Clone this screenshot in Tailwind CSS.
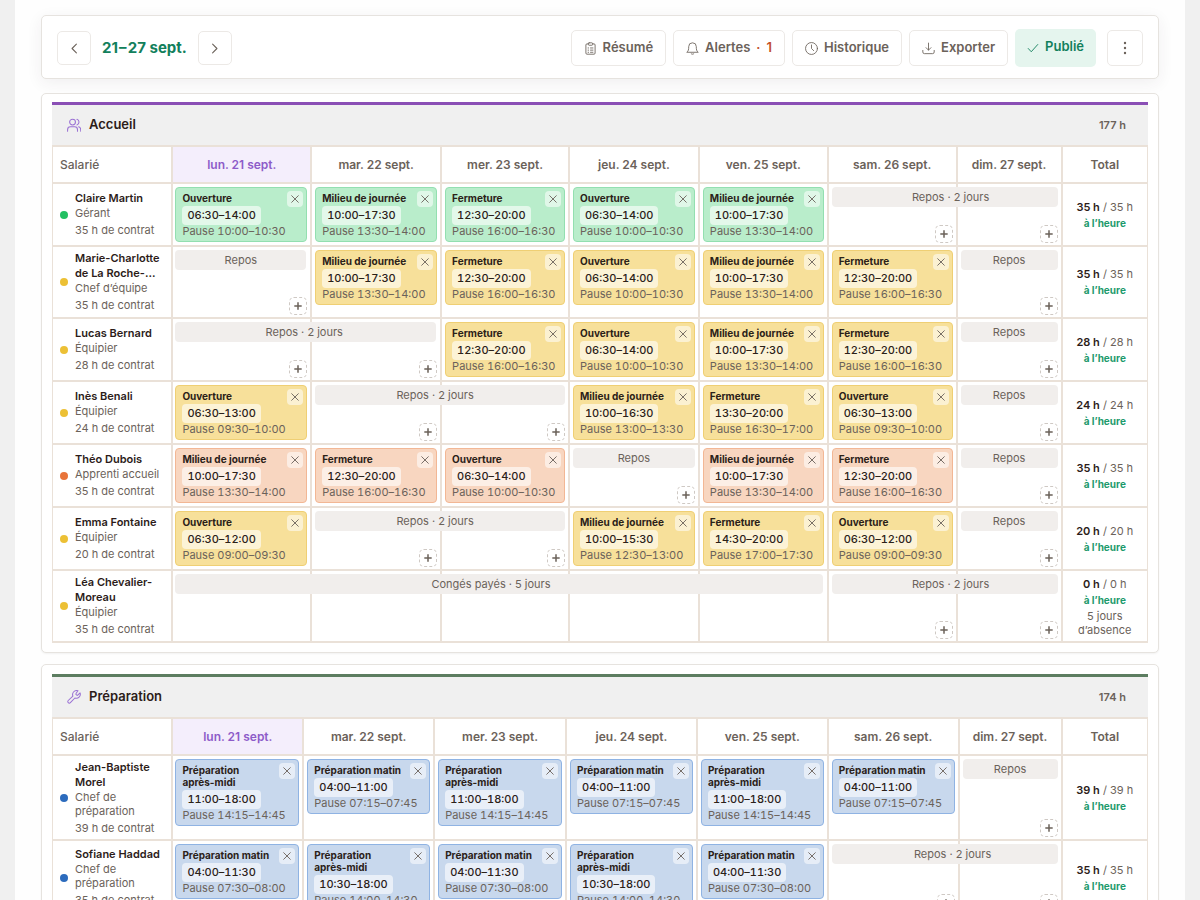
<!DOCTYPE html>
<html lang="fr">
<head>
    <meta charset="UTF-8">
    <meta name="viewport" content="width=device-width, initial-scale=1.0">
    <title>Planning - 21–27 sept.</title>
    <script src="https://cdn.jsdelivr.net/npm/@tailwindcss/browser@4"></script>
</head>
<body class="bg-[#f0f0f0] font-['Inter',sans-serif] text-[#6b625a]">
    <main class="mx-[15px] min-h-screen bg-[#fefefe] px-[26px] py-[15px]">

        <!-- Toolbar -->
        <header class="flex items-center justify-between rounded-[5px] border border-[#e6e3df] bg-white px-[15px] pt-0.5 h-16 mb-[14px] shadow-[0_4px_16px_rgba(60,40,60,0.07)]">
            <div class="flex items-center gap-[11px]">
                <button type="button" aria-label="Semaine précédente" class="flex size-[34px] items-center justify-center rounded-[5px] border border-[#ece9e6] bg-white">
                    <svg class="size-[13px]" viewBox="0 0 24 24" fill="none" stroke="currentColor" stroke-width="2" stroke-linecap="round" stroke-linejoin="round"><path d="M15.500 4l-8 8 8 8"/></svg>
                </button>
                <h1 class="text-[15px] font-bold text-[#12805c]">21&#8202;–&#8202;27 sept.</h1>
                <button type="button" aria-label="Semaine suivante" class="flex size-[34px] items-center justify-center rounded-[5px] border border-[#ece9e6] bg-white">
                    <svg class="size-[13px]" viewBox="0 0 24 24" fill="none" stroke="currentColor" stroke-width="2" stroke-linecap="round" stroke-linejoin="round"><path d="M8.500 4l8 8-8 8"/></svg>
                </button>
            </div>
            <div class="flex items-center gap-[7px] text-[13px] font-semibold">
                <button type="button" class="flex h-9 items-center gap-1.5 rounded-[5px] border border-[#ece9e6] bg-white px-3">
                    <svg class="size-[13px]" viewBox="0 0 24 24" fill="none" stroke="currentColor" stroke-width="1.600" stroke-linecap="round" stroke-linejoin="round"><path d="M8 3.500H5.500a2 2 0 0 0-2 2V20.500a2 2 0 0 0 2 2h13a2 2 0 0 0 2-2V5.500a2 2 0 0 0-2-2H16"/><rect x="8" y="1.500" width="8" height="4.500" rx="1.500"/><path d="M7.500 11h1M12 11h4.500M7.500 15h1M12 15h4.500M7.500 19h1M12 19h4.500"/></svg>
                    Résumé
                </button>
                <button type="button" class="flex h-9 items-center gap-1.5 rounded-[5px] border border-[#ece9e6] bg-white px-3">
                    <svg class="size-[13px]" viewBox="0 0 24 24" fill="none" stroke="currentColor" stroke-width="1.600" stroke-linecap="round" stroke-linejoin="round"><path d="M2 18.500c2.500-2 3-4 3-10a7 7 0 0 1 14 0c0 6 .5 8 3 10z"/><path d="M9.500 21.500c1.300 1.500 3.700 1.500 5 0"/></svg>
                    Alertes
                    <span class="flex gap-1.5 text-[#c2502a]"><span>·</span><span>1</span></span>
                </button>
                <button type="button" class="flex h-9 items-center gap-1.5 rounded-[5px] border border-[#ece9e6] bg-white px-3">
                    <svg class="size-[13px]" viewBox="0 0 24 24" fill="none" stroke="currentColor" stroke-width="1.600" stroke-linecap="round" stroke-linejoin="round"><circle cx="12" cy="12" r="11"/><path d="M12 5.500V12l4 4"/></svg>
                    Historique
                </button>
                <button type="button" class="flex h-9 items-center gap-1.5 rounded-[5px] border border-[#ece9e6] bg-white px-3">
                    <svg class="size-[13px]" viewBox="0 0 24 24" fill="none" stroke="currentColor" stroke-width="1.600" stroke-linecap="round" stroke-linejoin="round"><path d="M12 2V15M7.500 10.500L12 15l4.500-4.500"/><path d="M1.500 15.500v3a3 3 0 0 0 3 3h15a3 3 0 0 0 3-3v-3"/></svg>
                    Exporter
                </button>
                <button type="button" class="flex h-[38px] items-center gap-1.5 rounded-[5px] bg-[#e5f5ee] px-3 pb-0.5 text-[#12805c]">
                    <svg class="mt-0.5 size-3" viewBox="0 0 24 24" fill="none" stroke="currentColor" stroke-width="1.800" stroke-linecap="round" stroke-linejoin="round"><path d="M2.500 13l6 6.500L21.500 5"/></svg>
                    Publié
                </button>
                <button type="button" aria-label="Plus d’options" class="ml-1 flex size-9 items-center justify-center rounded-[5px] border border-[#ece9e6] bg-white">
                    <svg class="size-4" viewBox="0 0 16 16" fill="currentColor"><circle cx="8" cy="3" r="1.200"/><circle cx="8" cy="8" r="1.200"/><circle cx="8" cy="13" r="1.200"/></svg>
                </button>
            </div>
        </header>

        <!-- Accueil -->
        <section class="mb-[11px] rounded-[5px] border border-[#e6e3df] bg-white px-[10px] pt-2 pb-[9px] shadow-xs">
            <div class="flex h-[43px] items-center gap-2 border-t-3 border-[#8a4fb5] bg-[#f0f0f0] pl-[15px] pr-[22px]">
                <svg class="size-[14px] text-[#9b72d4]" viewBox="0 0 24 24" fill="none" stroke="currentColor" stroke-width="1.800" stroke-linecap="round" stroke-linejoin="round"><circle cx="9.500" cy="7" r="5"/><path d="M1 22.500v-2.500a5 5 0 0 1 5-5h7a5 5 0 0 1 5 5v2.500"/><path d="M17 2.200a5 5 0 0 1 0 9.600"/><path d="M23.500 22.500v-2.500a5 5 0 0 0-3.500-4.800"/></svg>
                <h2 class="text-[13px] font-semibold text-[#2c1c19]">Accueil</h2>
                <span class="ml-auto text-[11px] font-semibold">177 h</span>
            </div>
            <table id="accueil" class="w-full table-fixed border-collapse"></table>
        </section>

        <!-- Préparation -->
        <section class="rounded-[5px] border border-[#e6e3df] bg-white px-[10px] pt-[9px] pb-[9px] shadow-xs">
            <div class="flex h-[43px] items-center gap-2 border-t-3 border-[#5c7d60] bg-[#f0f0f0] pl-[15px] pr-[22px]">
                <svg class="size-[14px] text-[#9b72d4]" viewBox="0 0 24 24" fill="none" stroke="currentColor" stroke-width="1.800" stroke-linecap="round" stroke-linejoin="round"><path d="M15.500 6a1.200 1.200 0 0 0 0 1.600l1.300 1.300a1.200 1.200 0 0 0 1.600 0l4-3.800a6.800 6.800 0 0 1-8.900 8.600l-7.700 8a2.600 2.600 0 0 1-3.700-3.700l8-7.700a6.800 6.800 0 0 1 8.700-8.900z"/></svg>
                <h2 class="text-[13px] font-semibold text-[#2c1c19]">Préparation</h2>
                <span class="ml-auto text-[11px] font-semibold">174 h</span>
            </div>
            <table id="preparation" class="w-full table-fixed border-collapse"></table>
        </section>
    </main>

    <script>
        const days = ["lun. 21 sept.", "mar. 22 sept.", "mer. 23 sept.", "jeu. 24 sept.", "ven. 25 sept.", "sam. 26 sept.", "dim. 27 sept."];

        const cardColors = {
            green: "border-[#93dfb0] bg-[#b9edcb]",
            yellow: "border-[#efcf74] bg-[#f7e09a]",
            orange: "border-[#f2b795] bg-[#f8d6c0]",
            blue: "border-[#8fb3e3] bg-[#c8d8ed]"
        };
        const dotColors = {
            green: "bg-[#22c062]",
            yellow: "bg-[#ecc035]",
            orange: "bg-[#e8743a]",
            blue: "bg-[#2c6bbd]"
        };
        const rowHeights = {
            short: "h-[63px]",
            medium: "h-[72px]",
            card: "h-[75px]",
            tall: "h-[85px]"
        };

        const O = (time, pause) => ["Ouverture", time, pause];
        const M = (time, pause) => ["Milieu de journée", time, pause];
        const F = (time, pause) => ["Fermeture", time, pause];
        const PM = (time, pause) => ["Préparation matin", time, pause];
        const PA = (time, pause) => ["Préparation après-midi", time, pause];
        const repos = (count = 1) => ({ label: "Repos", count, open: true });

        const open = O("06:30–14:00", "10:00–10:30");
        const mid = M("10:00–17:30", "13:30–14:00");
        const close = F("12:30–20:00", "16:00–16:30");

        const teams = {
            accueil: {
                cols: [120, 139, 130, 128, 130, 129, 129, 105, 86],
                rows: [
                    { name: "Claire Martin", role: "Gérant", hours: 35, color: "green", size: "short", cells: [open, mid, close, open, mid, repos(2)] },
                    { name: "Marie-Charlotte de La Roche-…", role: "Chef d’équipe", hours: 35, color: "yellow", size: "medium", cells: [repos(), mid, close, open, mid, close, repos()] },
                    { name: "Lucas Bernard", role: "Équipier", hours: 28, color: "yellow", size: "short", cells: [repos(2), close, open, mid, close, repos()] },
                    { name: "Inès Benali", role: "Équipier", hours: 24, color: "yellow", size: "short", cells: [O("06:30–13:00", "09:30–10:00"), repos(2), M("10:00–16:30", "13:00–13:30"), F("13:30–20:00", "16:30–17:00"), O("06:30–13:00", "09:30–10:00"), repos()] },
                    { name: "Théo Dubois", role: "Apprenti accueil", hours: 35, color: "orange", size: "short", cells: [mid, close, open, repos(), mid, close, repos()] },
                    { name: "Emma Fontaine", role: "Équipier", hours: 20, color: "yellow", size: "short", cells: [O("06:30–12:00", "09:00–09:30"), repos(2), M("10:00–15:30", "12:30–13:00"), F("14:30–20:00", "17:00–17:30"), O("06:30–12:00", "09:00–09:30"), repos()] },
                    { name: "Léa Chevalier-Moreau", role: "Équipier", hours: 35, total: 0, absence: "5 jours d’absence", color: "yellow", size: "medium", cells: [{ label: "Congés payés", count: 5, open: false }, repos(2)] }
                ]
            },
            preparation: {
                cols: [120, 131, 131, 132, 131, 131, 131, 103, 86],
                rows: [
                    { name: "Jean-Baptiste Morel", role: "Chef de préparation", hours: 39, color: "blue", size: "tall", cells: [PA("11:00–18:00", "14:15–14:45"), PM("04:00–11:00", "07:15–07:45"), PA("11:00–18:00", "14:15–14:45"), PM("04:00–11:00", "07:15–07:45"), PA("11:00–18:00", "14:15–14:45"), PM("04:00–11:00", "07:15–07:45"), repos()] },
                    { name: "Sofiane Haddad", role: "Chef de préparation", hours: 35, color: "blue", size: "card", cells: [PM("04:00–11:30", "07:30–08:00"), PA("10:30–18:00", "14:00–14:30"), PM("04:00–11:30", "07:30–08:00"), PA("10:30–18:00", "14:00–14:30"), PM("04:00–11:30", "07:30–08:00"), repos(2)] }
                ]
            }
        };

        const closeIcon = `<svg class="size-2" viewBox="0 0 8 8" fill="none" stroke="currentColor" stroke-width="0.900" stroke-linecap="round"><path d="M.7.7l6.600 6.600M7.300.7L.7 7.300"/></svg>`;
        const plusIcon = `<svg class="size-2" viewBox="0 0 8 8" fill="none" stroke="currentColor" stroke-width="1.500"><path d="M4 .3v7.400M.3 4h7.400"/></svg>`;

        function shiftCell([title, time, pause], color) {
            return `<td class="border-2 border-[#eae1d8] px-[3px] pt-[3px] pb-0.5 align-top [th+&]:pl-0.5">
                <div class="relative rounded-[4px] border px-1.5 pt-1 pb-[3px] ${cardColors[color]}">
                    <p class="pr-5 text-[10px] leading-3 font-bold text-[#2b2118]">${title}</p>
                    <p class="mt-0.5 w-fit rounded-[4px] bg-white/60 px-[5px] text-[11px] leading-[19px] font-medium text-[#2b2118] tabular-nums">${time}</p>
                    <p class="text-[11px] leading-[13px] whitespace-nowrap tabular-nums">Pause ${pause}</p>
                    <button type="button" aria-label="Supprimer ${title}" class="absolute top-[3px] right-[3px] flex size-4 items-center justify-center rounded-[4px] bg-white/55">${closeIcon}</button>
                </div>
            </td>`;
        }

        // A rest bar starts in its first day and runs over the borders of the following ones
        function offCells({ label, count, open }, first, cols) {
            const span = cols.slice(first, first + count).reduce((a, b) => a + b, 0);
            const ratio = span / cols[first];
            const text = count > 1 ? `${label} · ${count} jours` : label;
            // the label of a long bar is centred near a day border, not on the bar itself
            const shift = count === 2 ? cols[first] - 6 - span / 2 : count > 2 ? -8 : 0;
            const pad = shift > 0 ? `padding-left: ${shift * 2}px` : `padding-right: ${shift * -2}px`;
            let html = "";
            for (let i = 0; i < count; i++) {
                const bar = i === 0
                    ? `<div class="absolute top-[3px] left-[3px] z-10 h-5 rounded-[4px] bg-[#f1eeec] text-center text-[11px] leading-5 [th+td>&]:left-0.5" style="width: calc(${ratio} * (100% + 2px) - 8px); ${pad}">${text}</div>`
                    : "";
                const add = open
                    ? `<button type="button" aria-label="Ajouter, ${days[first - 1 + i]}" class="ml-auto flex size-[18px] items-center justify-center rounded-[5px] border border-dashed border-[#cfc9c4] bg-white">${plusIcon}</button>`
                    : "";
                html += `<td class="relative border-2 border-[#eae1d8] px-[3px] pb-0.5 align-bottom">${bar}${add}</td>`;
            }
            return html;
        }

        function renderRow(row, cols) {
            const total = row.total ?? row.hours;
            let day = 1;
            let cells = "";
            for (const cell of row.cells) {
                if (Array.isArray(cell)) {
                    cells += shiftCell(cell, row.color);
                    day++;
                } else {
                    cells += offCells(cell, day, cols);
                    day += cell.count;
                }
            }
            return `<tr class="${rowHeights[row.size]}">
                <th scope="row" class="relative border-2 border-l border-[#eae1d8] py-0 pr-1 pl-[7px] text-left align-middle shadow-[4px_0_4px_-3px_rgba(60,40,30,0.16)]">
                    <div class="flex items-center gap-[7px]">
                        <span class="size-2 shrink-0 rounded-full ${dotColors[row.color]}"></span>
                        <div class="text-[11px] font-normal">
                            <p class="leading-[15px] font-semibold text-[#2c1c19]">${row.name}</p>
                            <p class="leading-[14px]">${row.role}</p>
                            <p class="mt-0.5 leading-4">${row.hours} h de contrat</p>
                        </div>
                    </div>
                </th>
                ${cells}
                <td class="border-2 border-r border-[#eae1d8] p-0 text-center align-middle text-[11px]">
                    <p class="leading-4"><b class="font-semibold text-[#2c1c19]">${total} h</b> / ${total} h</p>
                    <p class="text-[10px] leading-4 font-bold text-[#1d9a6c]">à l’heure</p>
                    ${row.absence ? `<p class="mt-px px-3 leading-[14px]">${row.absence}</p>` : ""}
                </td>
            </tr>`;
        }

        for (const [id, team] of Object.entries(teams)) {
            const sum = team.cols.reduce((a, b) => a + b, 0);
            const colgroup = team.cols.map(w => `<col style="width: ${w / sum * 100}%">`).join("");
            const heads = days.map((d, i) => i === 0
                ? `<th scope="col" class="border-2 border-[#eae1d8] bg-[#f4eefc] p-0 font-semibold text-[#8d5cc9]">${d}</th>`
                : `<th scope="col" class="border-2 border-[#eae1d8] p-0 font-semibold">${d}</th>`).join("");
            document.getElementById(id).innerHTML = `
                <colgroup>${colgroup}</colgroup>
                <thead>
                    <tr class="h-[37px] text-xs">
                        <th scope="col" class="relative border-2 border-l border-[#eae1d8] py-0 pl-[7px] text-left font-medium shadow-[4px_0_4px_-3px_rgba(60,40,30,0.16)]">Salarié</th>
                        ${heads}
                        <th scope="col" class="relative border-2 border-r border-[#eae1d8] p-0 font-semibold shadow-[-4px_0_4px_-3px_rgba(60,40,30,0.16)]">Total</th>
                    </tr>
                </thead>
                <tbody>${team.rows.map(r => renderRow(r, team.cols)).join("")}</tbody>`;
        }
    </script>
</body>
</html>
